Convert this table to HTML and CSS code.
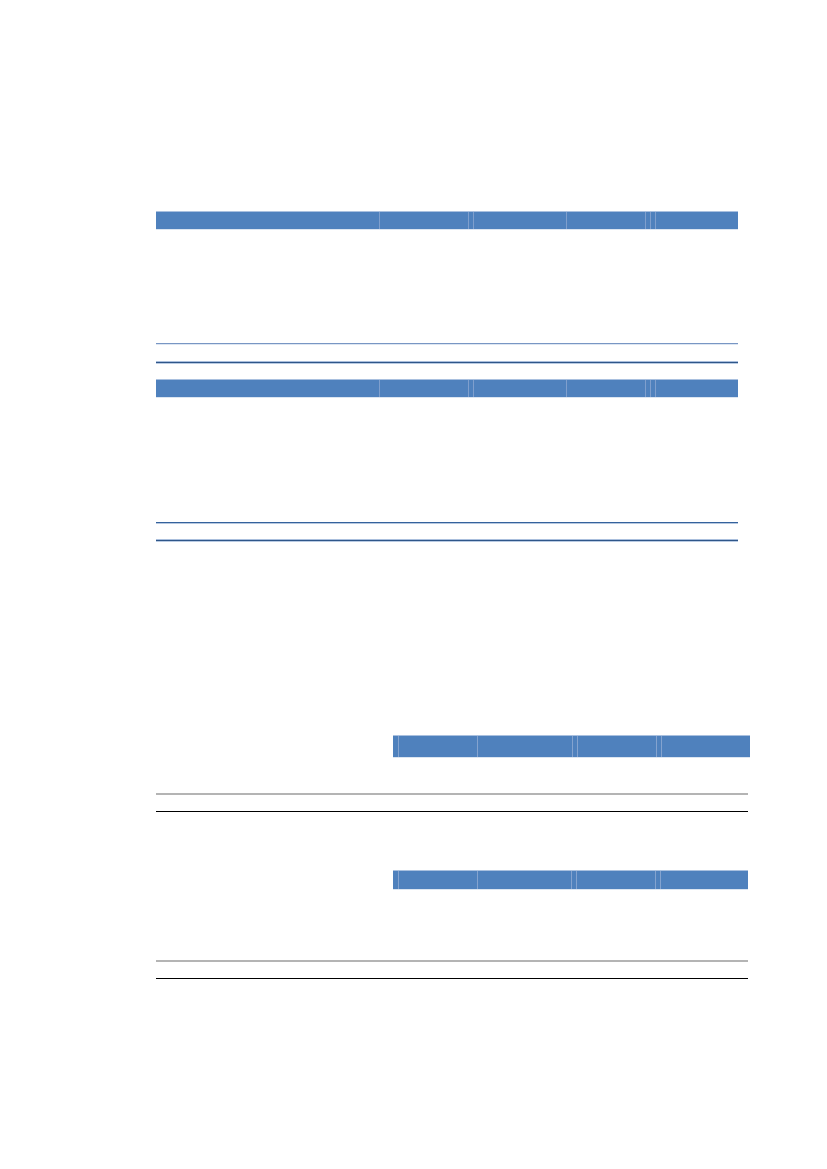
FILE: index.html
```html
<!DOCTYPE html>
<html>
<head>
<meta charset="utf-8">
<link rel="stylesheet" href="styles.css">
</head>
<body>
<div class="page">
  <div class="hdr h1">
    <div class="c" style="width:223px"></div>
    <div class="c" style="width:89px"></div>
    <div class="c" style="width:5px"></div>
    <div class="c" style="width:93px"></div>
    <div class="c" style="width:79px"></div>
    <div class="c" style="width:5px"></div>
    <div class="c" style="width:5px"></div>
    <div class="c fill"></div>
  </div>
  <div class="ln blue-light l1"></div>
  <div class="ln blue-dark l2"></div>
  <div class="hdr h2">
    <div class="c" style="width:223px"></div>
    <div class="c" style="width:89px"></div>
    <div class="c" style="width:5px"></div>
    <div class="c" style="width:93px"></div>
    <div class="c" style="width:79px"></div>
    <div class="c" style="width:5px"></div>
    <div class="c" style="width:5px"></div>
    <div class="c fill"></div>
  </div>
  <div class="ln blue-mid l3"></div>
  <div class="ln blue-dark l4"></div>

  <div class="hdr sub s1">
    <div class="c" style="width:5px"></div>
    <div class="c" style="width:79px"></div>
    <div class="c" style="width:95px"></div>
    <div class="c" style="width:5px"></div>
    <div class="c" style="width:79px"></div>
    <div class="c" style="width:5px"></div>
    <div class="c fill"></div>
  </div>
  <div class="ln wide gray g1"></div>
  <div class="ln wide black k1"></div>
  <div class="hdr sub s2">
    <div class="c" style="width:5px"></div>
    <div class="c" style="width:79px"></div>
    <div class="c" style="width:94px"></div>
    <div class="c" style="width:5px"></div>
    <div class="c" style="width:79px"></div>
    <div class="c" style="width:5px"></div>
    <div class="c fill"></div>
  </div>
  <div class="ln wide gray g2"></div>
  <div class="ln wide black k2"></div>
</div>
</body>
</html>
```
FILE: styles.css
```css
html, body {
  margin: 0;
  padding: 0;
  background: #ffffff;
  font-family: "Liberation Sans", Arial, sans-serif;
}
.page {
  padding: 212px 0 0 156px;
  width: 582px;
}
.hdr {
  display: flex;
  background: #4f81bd;
  height: 17px;
  box-shadow: 0 -1px 0 #a9c0df, 0 1px 0 #dbe5f1;
}
.hdr .c {
  flex: none;
  height: 100%;
  box-sizing: border-box;
  border-left: 1px solid #7f9fcd;
}
.hdr .c:first-child { border-left: none; }
.hdr .c.fill { flex: 1; }
.h2 { margin-top: 17px; }
.ln { width: 582px; }
.blue-light { height: 1px; background: #7896c4; box-shadow: 0 1px 0 #dde6f2; }
.blue-dark { height: 1px; background: #2f5689; box-shadow: 0 1px 0 #b9cbe3, 0 -1px 0 #aabfdd; }
.blue-mid { height: 1px; background: #34629c; box-shadow: 0 1px 0 #b6c8e0; }
.l1 { margin-top: 114px; }
.l2 { margin-top: 18px; }
.l3 { margin-top: 125px; }
.l4 { margin-top: 17px; }
.sub {
  margin-left: 237px;
  width: 357px;
}
.sub .c { border-left-color: #84a3cf; }
.s1 { margin-top: 195px; height: 21px; }
.s2 { margin-top: 59px; height: 18px; width: 355px; }
.wide { width: 592px; }
.gray { height: 2px; background: #b4b4b4; }
.black { height: 1px; background: #000000; }
.g1 { margin-top: 36px; }
.k1 { margin-top: 16px; }
.g2 { margin-top: 71px; }
.k2 { margin-top: 16px; }
```
